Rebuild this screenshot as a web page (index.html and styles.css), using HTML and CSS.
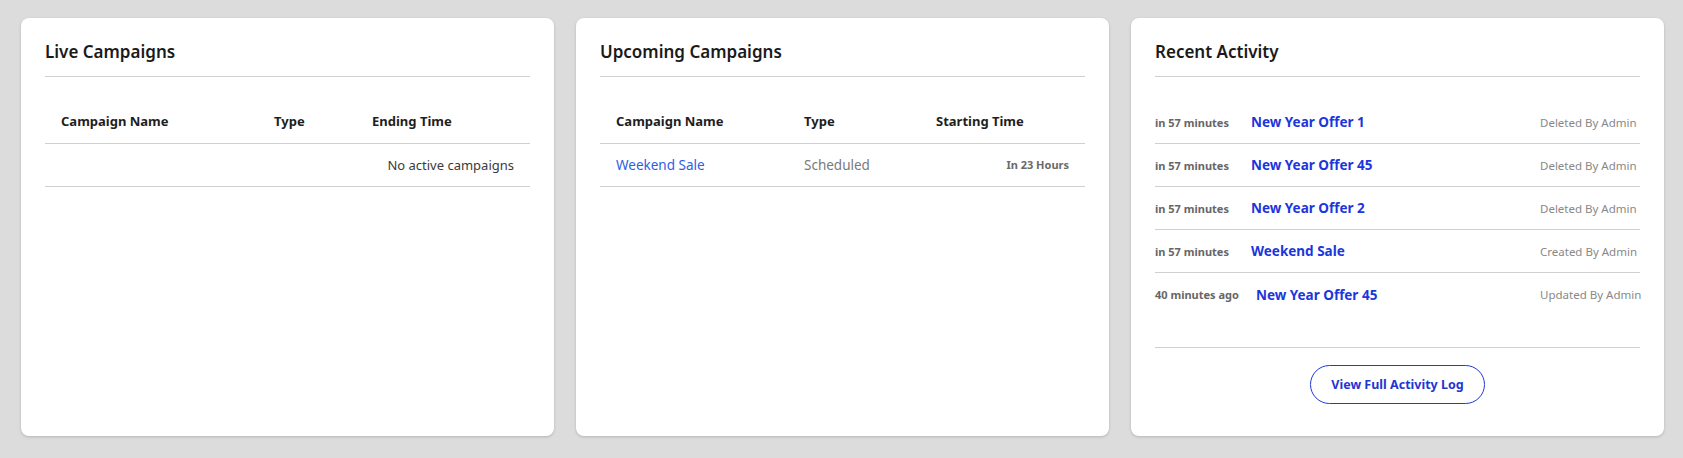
FILE: index.html
```html
<!DOCTYPE html>
<html lang="en">
<head>
<meta charset="utf-8">
<title>Campaigns Dashboard</title>
<link rel="stylesheet" href="styles.css">
</head>
<body>
<main class="dashboard">
  <section class="card">
    <h2 class="card-title">Live Campaigns</h2>
    <table class="camp-table live">
      <colgroup><col class="c1"><col class="c2"><col class="c3"></colgroup>
      <thead>
        <tr><th>Campaign Name</th><th>Type</th><th>Ending Time</th></tr>
      </thead>
      <tbody>
        <tr><td colspan="3" class="empty">No active campaigns</td></tr>
      </tbody>
    </table>
  </section>

  <section class="card">
    <h2 class="card-title">Upcoming Campaigns</h2>
    <table class="camp-table upcoming">
      <colgroup><col class="c1"><col class="c2"><col class="c3"></colgroup>
      <thead>
        <tr><th>Campaign Name</th><th>Type</th><th>Starting Time</th></tr>
      </thead>
      <tbody>
        <tr>
          <td><a class="camp-link" href="#">Weekend Sale</a></td>
          <td class="type">Scheduled</td>
          <td class="when">In 23 Hours</td>
        </tr>
      </tbody>
    </table>
  </section>

  <section class="card activity-card">
    <h2 class="card-title">Recent Activity</h2>
    <ul class="activity-list">
      <li class="activity"><span class="act-time">in 57 minutes</span><a class="act-name" href="#">New Year Offer 1</a><span class="act-action">Deleted By Admin</span></li>
      <li class="activity"><span class="act-time">in 57 minutes</span><a class="act-name" href="#">New Year Offer 45</a><span class="act-action">Deleted By Admin</span></li>
      <li class="activity"><span class="act-time">in 57 minutes</span><a class="act-name" href="#">New Year Offer 2</a><span class="act-action">Deleted By Admin</span></li>
      <li class="activity"><span class="act-time">in 57 minutes</span><a class="act-name" href="#">Weekend Sale</a><span class="act-action">Created By Admin</span></li>
      <li class="activity"><span class="act-time">40 minutes ago</span><a class="act-name" href="#">New Year Offer 45</a><span class="act-action">Updated By Admin</span></li>
    </ul>
    <div class="activity-footer">
      <a class="log-btn" href="#">View Full Activity Log</a>
    </div>
  </section>
</main>
</body>
</html>
```

FILE: styles.css
```css
* { box-sizing: border-box; }

html, body {
  margin: 0;
  padding: 0;
  background: #dcdcdc;
  font-family: "Noto Sans", "Open Sans", sans-serif;
  color: #222;
}

.dashboard {
  display: grid;
  grid-template-columns: repeat(3, 1fr);
  gap: 22px;
  padding: 18px 19px 22px 21px;
  height: 458px;
}

.card {
  background: #fff;
  border-radius: 8px;
  box-shadow: 0 1px 3px rgba(0, 0, 0, 0.18);
  padding: 24px;
  display: flex;
  flex-direction: column;
}

.card-title {
  margin: 0;
  font-size: 17px;
  line-height: 20px;
  font-weight: 600;
  color: #1a1a1a;
  padding-bottom: 14px;
  border-bottom: 1px solid #d0d0d0;
}

.camp-table {
  margin-top: 23px;
  width: 100%;
  border-collapse: collapse;
  table-layout: fixed;
  font-size: 13px;
}

.live .c1 { width: 213px; }
.live .c2 { width: 98px; }
.upcoming .c1 { width: 188px; }
.upcoming .c2 { width: 132px; }

.camp-table th,
.camp-table td {
  height: 43px;
  padding: 0 16px;
  border-bottom: 1px solid #d0d0d0;
  text-align: left;
  vertical-align: middle;
  white-space: nowrap;
}

.camp-table th {
  font-weight: 700;
  color: #1e1e1e;
}

.camp-table td.empty {
  text-align: right;
  color: #3a3a3a;
}

.camp-link {
  color: #2d5ee6;
  font-size: 13.5px;
  text-decoration: none;
}

.camp-table td.type {
  font-size: 13.5px;
  color: #7a7a7a;
}

.camp-table td.when {
  text-align: right;
  font-size: 11px;
  font-weight: 700;
  color: #6a6a6a;
}

.activity-list {
  list-style: none;
  margin: 24px 0 0;
  padding: 0;
}

.activity {
  display: flex;
  align-items: center;
  height: 43px;
  border-bottom: 1px solid #d0d0d0;
}

.activity:last-child {
  border-bottom: none;
}

.act-time {
  min-width: 79px;
  margin-right: 17px;
  font-size: 11px;
  font-weight: 700;
  color: #666;
  white-space: nowrap;
}

.act-name {
  flex: 1;
  font-size: 13.5px;
  font-weight: 700;
  color: #1c36dc;
  text-decoration: none;
  white-space: nowrap;
}

.act-action {
  width: 100px;
  font-size: 11.5px;
  color: #888;
  white-space: nowrap;
}

.activity-footer {
  margin-top: 31px;
  border-top: 1px solid #d0d0d0;
  padding-top: 17px;
  display: flex;
  justify-content: center;
}

.log-btn {
  display: inline-flex;
  align-items: center;
  justify-content: center;
  width: 175px;
  height: 39px;
  border: 1px solid #1f3ad8;
  border-radius: 20px;
  color: #1f35d4;
  font-size: 12.5px;
  font-weight: 700;
  text-decoration: none;
}
```
